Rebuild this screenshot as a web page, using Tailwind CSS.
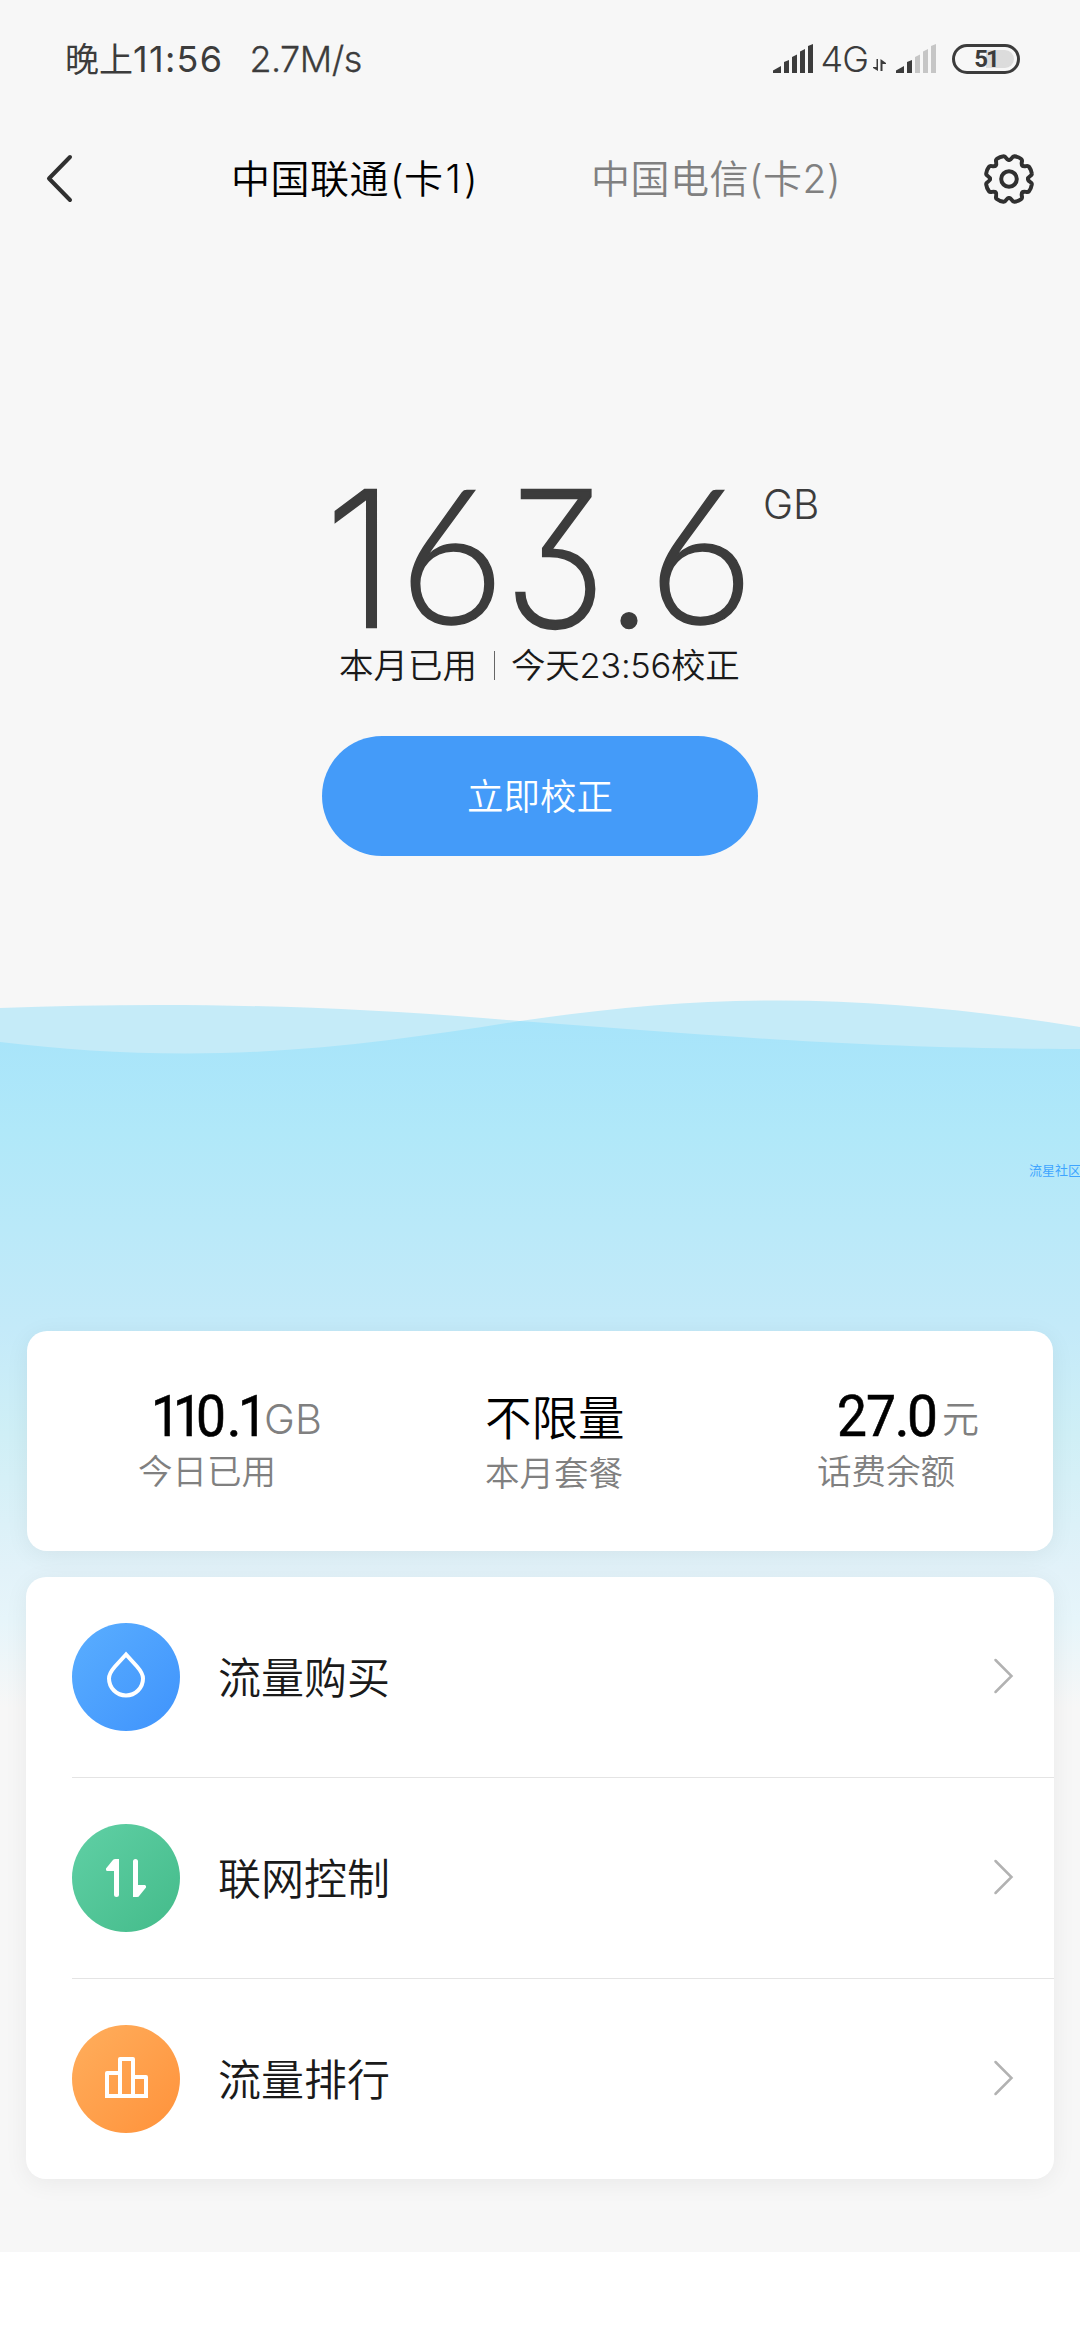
<!DOCTYPE html>
<html lang="zh-CN">
<head>
<meta charset="utf-8">
<title>流量</title>
<script src="https://cdn.jsdelivr.net/npm/@tailwindcss/browser@4"></script>
</head>
<body class="bg-white font-['Inter','Noto_Sans_CJK_SC',sans-serif] font-[350]">
<div class="relative isolate flex h-[2252px] w-[1080px] flex-col overflow-hidden bg-[#f7f7f7]">

  <!-- water backdrop -->
  <svg class="absolute left-0 top-0 -z-10" width="1080" height="1740" viewBox="0 0 1080 1740">
    <defs>
      <linearGradient id="water" gradientUnits="userSpaceOnUse" x1="0" y1="1020" x2="0" y2="1708">
        <stop offset="0" stop-color="#a7e4fa"/>
        <stop offset=".16" stop-color="#b0e8f9"/>
        <stop offset=".45" stop-color="#c4eaf9"/>
        <stop offset=".6" stop-color="#cfeff6"/>
        <stop offset=".8" stop-color="#e2f2f9"/>
        <stop offset=".87" stop-color="#e6f5fa"/>
        <stop offset="1" stop-color="#f7f7f7"/>
      </linearGradient>
    </defs>
    <path fill="#c5ebf8" d="M0 1008C52 1006 105 1005 158 1005C290 1005 400 1011 520 1021C690 1033 850 1049 1080 1049V1080H0Z"/>
    <path fill="#c5ebf8" d="M0 1042C60 1049 120 1053.5 186 1053.5C310 1053.5 420 1037 520 1021C610 1008 690 1000.5 778 1000.5C880 1000.5 980 1011 1080 1027V1080H0Z"/>
    <path fill="url(#water)" d="M0 1042C60 1049 120 1053.5 186 1053.5C310 1053.5 420 1037 520 1021C690 1033 850 1049 1080 1049V1740H0Z"/>
  </svg>

  <!-- status bar -->
  <div class="flex h-[118px] items-center pl-[65px] pr-[60px] text-[#3c3c3c]">
    <span class="text-[34px] leading-[40px] font-normal whitespace-nowrap">晚上<span class="text-[36px] tracking-[1.300px]">11:56</span></span>
    <span class="ml-[26px] text-[36px] leading-[40px] tracking-[-0.5px] [-webkit-text-stroke:0.3px_#3c3c3c]">2.7M/s</span>
    <svg class="ml-auto" width="40" height="30" viewBox="0 0 40 30" fill="#3c3c3c">
      <path d="M0 29V26.5L8 22V29ZM11 29V18L16 16V29ZM19 29V13L24 10.500V29ZM27 29V7.500L32 5V29ZM35 29V2L40 0V29Z"/>
    </svg>
    <span class="ml-[8px] text-[36px] leading-[40px] tracking-[-1px]">4G</span>
    <svg class="ml-[5px] mt-[12px]" width="13" height="12" viewBox="0 0 13 12" fill="#3c3c3c"><path d="M3.500 0H5V12L0 9V8H3.500ZM7.500 0L13 4V5H9.500V12H7.500Z"/></svg>
    <svg class="ml-[10px]" width="40" height="30" viewBox="0 0 40 30">
      <path fill="#3c3c3c" d="M0 29V26.500L8 22V29ZM11 29V18L16 16V29Z"/>
      <path fill="#c6c6c6" d="M19 29V13L24 10.500V29ZM27 29V7.500L32 5V29ZM35 29V2L40 0V29Z"/>
    </svg>
    <div class="ml-[16px] flex h-[30px] w-[68px] items-center justify-center rounded-full border-3 border-[#3c3c3c] p-[3px]">
      <div class="flex h-[18px] w-[56px] items-center justify-center rounded-full bg-linear-to-r from-transparent from-50% to-[#dcdcdc] to-50%">
        <span class="font-['Roboto'] text-[24px] leading-[18px] font-bold tracking-[-2px]">51</span>
      </div>
    </div>
  </div>

  <!-- header -->
  <header class="flex h-[122px] items-center">
    <svg class="ml-[45px]" width="30" height="52" viewBox="0 0 30 52" fill="none" stroke="#303030" stroke-width="4" stroke-linecap="round" stroke-linejoin="round"><path d="M25 4L4 25.500L25 47"/></svg>
    <span class="ml-[156px] w-[250px] whitespace-nowrap text-[39px] leading-[50px] tracking-[0.5px] text-black">中国联通<span class="ml-[1px]">(卡</span><span class="ml-[2px] tracking-[3px]">1)</span></span>
    <span class="ml-[110px] w-[250px] whitespace-nowrap text-[39px] leading-[50px] tracking-[0.500px] text-[#808080]">中国电信(卡2)</span>
    <svg class="ml-auto mr-[44px]" width="54" height="54" viewBox="-27 -27 54 54" fill="none" stroke="#303030" stroke-width="4" stroke-linecap="round">
      <circle r="7.800"/>
      <g id="q"><path id="t" d="M0 -19C3.200 -19 2.600 -23.200 5.500 -22.800Q9.600 -22.100 12.250 -20C14.570 -18.250 11.170 -15.700 13.400 -13.400"/><use href="#t" transform="rotate(45)"/></g>
      <use href="#q" transform="rotate(90)"/><use href="#q" transform="rotate(180)"/><use href="#q" transform="rotate(270)"/>
    </svg>
  </header>

  <!-- monthly usage -->
  <main class="flex flex-col">
    <div class="mt-[249px] flex h-[151px] pl-[324px] text-[#3c3c3c]">
      <div class="flex text-[188px] leading-[140px] font-extralight [font-feature-settings:'cv09'] [-webkit-text-stroke:2.500px_#3c3c3c]">
        <span class="w-[75px]">1</span><span class="-mt-[8px] w-[105px] origin-left scale-x-96 font-['Lato'] font-light [-webkit-text-stroke:1.500px_#3c3c3c]">6</span><span class="w-[99px] origin-left scale-x-91">3</span><span class="w-[45px]">.</span><span class="-mt-[8px] w-[115px] origin-left scale-x-96 font-['Lato'] font-light [-webkit-text-stroke:1.500px_#3c3c3c]">6</span>
      </div>
      <span class="-mt-[8px] text-[40.500px] leading-[48px]">GB</span>
    </div>
    <div class="flex h-[50px] items-center pl-[339px] text-[34.500px] leading-[50px] text-[#1a1a1a]">
      <span class="w-[155px] pt-[2px]">本月已用</span>
      <span class="h-[29px] w-px bg-[#666]"></span>
      <span class="ml-[16px] pt-[2px] tracking-[-0.3px]">今天23:56校正</span>
    </div>
    <button class="mx-auto mt-[46px] h-[120px] w-[436px] rounded-[60px] bg-[#449bf9] pt-[2px] text-[36.500px] text-white">立即校正</button>
  </main>

  <span class="absolute left-[1029px] top-[1160px] whitespace-nowrap text-[13px] leading-[20px] font-normal text-[#3fa5ff]">流星社区</span>

  <!-- plan summary -->
  <section class="mx-[27px] mt-[475px] flex h-[220px] shrink-0 rounded-[20px] bg-white text-[34.500px] text-[#808080] shadow-[0_4px_24px_rgba(0,0,0,0.06)]">
    <div class="w-[458px] pl-[111px] pt-[56px]">
      <div class="flex h-[60px] items-baseline whitespace-nowrap pl-[13px] text-[41.500px] leading-[58px]">
        <span class="flex font-['Roboto'] text-[58px] font-normal text-black [-webkit-text-stroke:0.6px_#000]"><span class="w-[22.300px] origin-left scale-x-90">1</span><span class="w-[22.800px] origin-left scale-x-90">1</span><span class="w-[30.500px] origin-left scale-x-92">0</span><span class="w-[11.700px]">.</span><span class="w-[25.800px] origin-left scale-x-90">1</span></span><span class="-translate-y-[2px]">GB</span>
      </div>
      <div class="leading-[50px]">今日已用</div>
    </div>
    <div class="w-[332px] pt-[58px]">
      <div class="h-[60px] text-[46.500px] leading-[58px] text-black">不限量</div>
      <div class="leading-[50px]">本月套餐</div>
    </div>
    <div class="pt-[56px]">
      <div class="flex h-[60px] items-baseline whitespace-nowrap pl-[20px] text-[37px] leading-[58px]">
        <span class="flex font-['Roboto'] text-[58px] font-normal text-black [-webkit-text-stroke:0.6px_#000]"><span class="w-[29px] origin-left scale-x-92">2</span><span class="w-[28.500px] origin-left scale-x-92">7</span><span class="w-[12.500px]">.</span><span class="w-[35px] origin-left scale-x-95">0</span></span><span class="-translate-y-[3px]">元</span>
      </div>
      <div class="leading-[50px]">话费余额</div>
    </div>
  </section>

  <!-- menu -->
  <nav class="mx-[26px] mt-[26px] flex h-[602px] shrink-0 flex-col rounded-[20px] bg-white pl-[46px] text-[43px] text-[#1a1a1a] shadow-[0_4px_24px_rgba(0,0,0,0.06)]">
    <a class="flex h-[201px] items-center border-b border-[#e4e4e4] pr-[40px]">
      <span class="flex size-[108px] items-center justify-center rounded-full bg-linear-to-br from-[#5aaeff] to-[#3f93fc]">
        <svg width="54" height="54" viewBox="-27 -27 54 54" fill="none" stroke="#fff" stroke-width="4"><path d="M0 -22.500L-11 -10.500C-14.500 -6.500 -17 -3 -17 1.500A17 17 0 0 0 17 1.500C17 -3 14.500 -6.500 11 -10.500Z"/></svg>
      </span>
      <span class="ml-[38px] pt-[2px]">流量购买</span>
      <svg class="-mt-[2px] ml-auto" width="22" height="38" viewBox="0 0 22 38" fill="none" stroke="#b2b2b2" stroke-width="2.500" stroke-linecap="round"><path d="M3.500 3L19.500 19L3.500 35"/></svg>
    </a>
    <a class="flex h-[201px] items-center border-b border-[#e4e4e4] pr-[40px]">
      <span class="flex size-[108px] items-center justify-center rounded-full bg-linear-to-br from-[#60d0a5] to-[#43bb8a]">
        <svg width="54" height="54" viewBox="-27 -27 54 54" fill="#fff"><path d="M-12 -19H-7V16.500A2.500 2.500 0 0 1 -12 16.500V-7H-19Q-20.500 -7.500 -20 -9.500L-13.500 -17.500Q-12.800 -19 -11 -19ZM12 19H7V-16.500A2.500 2.500 0 0 1 12 -16.500V7H19Q20.500 7.500 20 9.500L13.500 17.500Q12.800 19 11 19Z"/></svg>
      </span>
      <span class="ml-[38px] pt-[2px]">联网控制</span>
      <svg class="-mt-[2px] ml-auto" width="22" height="38" viewBox="0 0 22 38" fill="none" stroke="#b2b2b2" stroke-width="2.500" stroke-linecap="round"><path d="M3.500 3L19.500 19L3.500 35"/></svg>
    </a>
    <a class="flex h-[200px] items-center pr-[40px]">
      <span class="flex size-[108px] items-center justify-center rounded-full bg-linear-to-br from-[#ffae5c] to-[#ff923a]">
        <svg width="54" height="54" viewBox="-27 -27 54 54" fill="none" stroke="#fff" stroke-width="4" stroke-linejoin="round"><path d="M-19 17V-6H-6M7 -2H20V17"/><path d="M-6 17V-20H7V17"/><path d="M-21 17H22"/></svg>
      </span>
      <span class="ml-[38px] pt-[2px]">流量排行</span>
      <svg class="-mt-[2px] ml-auto" width="22" height="38" viewBox="0 0 22 38" fill="none" stroke="#b2b2b2" stroke-width="2.500" stroke-linecap="round"><path d="M3.500 3L19.500 19L3.500 35"/></svg>
    </a>
  </nav>
</div>
</body>
</html>
